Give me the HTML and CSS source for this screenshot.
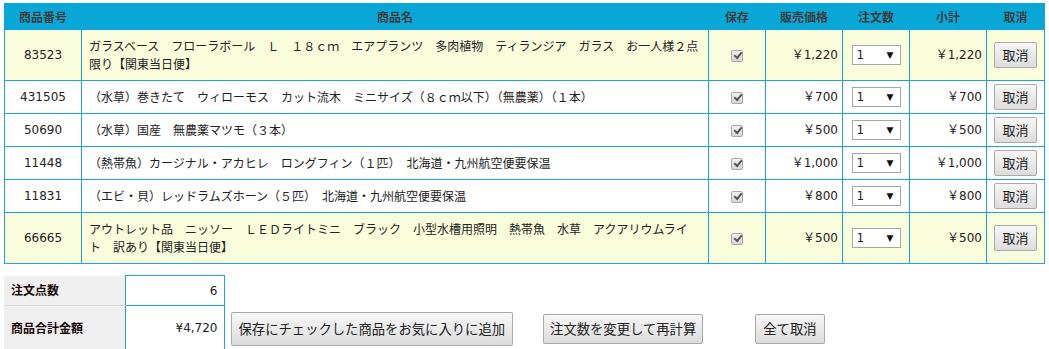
FILE: index.html
```html
<!DOCTYPE html>
<html lang="ja">
<head>
    <meta charset="UTF-8">
    <title>買い物かご</title>
    <link rel="stylesheet" href="styles.css">
</head>
<body>
    <table class="cart">
        <colgroup>
            <col class="col-code">
            <col class="col-name">
            <col class="col-keep">
            <col class="col-price">
            <col class="col-qty">
            <col class="col-sub">
            <col class="col-cancel">
        </colgroup>
        <thead>
            <tr>
                <th>商品番号</th>
                <th>商品名</th>
                <th>保存</th>
                <th>販売価格</th>
                <th>注文数</th>
                <th>小計</th>
                <th>取消</th>
            </tr>
        </thead>
        <tbody>
            <tr class="sameday">
                <td class="code">83523</td>
                <td class="name">ガラスベース　フローラボール　Ｌ　１８ｃｍ　エアプランツ　多肉植物　ティランジア　ガラス　お一人様２点限り【関東当日便】</td>
                <td class="keep"><span class="check"></span></td>
                <td class="price">￥1,220</td>
                <td class="qty"><span class="qty-box"><select><option>1</option><option>2</option><option>3</option></select></span></td>
                <td class="price">￥1,220</td>
                <td class="cancel"><button class="btn btn-row">取消</button></td>
            </tr>
            <tr>
                <td class="code">431505</td>
                <td class="name">（水草）巻きたて　ウィローモス　カット流木　ミニサイズ（８ｃｍ以下）（無農薬）（１本）</td>
                <td class="keep"><span class="check"></span></td>
                <td class="price">￥700</td>
                <td class="qty"><span class="qty-box"><select><option>1</option><option>2</option><option>3</option></select></span></td>
                <td class="price">￥700</td>
                <td class="cancel"><button class="btn btn-row">取消</button></td>
            </tr>
            <tr>
                <td class="code">50690</td>
                <td class="name">（水草）国産　無農薬マツモ（３本）</td>
                <td class="keep"><span class="check"></span></td>
                <td class="price">￥500</td>
                <td class="qty"><span class="qty-box"><select><option>1</option><option>2</option><option>3</option></select></span></td>
                <td class="price">￥500</td>
                <td class="cancel"><button class="btn btn-row">取消</button></td>
            </tr>
            <tr>
                <td class="code">11448</td>
                <td class="name">（熱帯魚）カージナル・アカヒレ　ロングフィン（１匹）　北海道・九州航空便要保温</td>
                <td class="keep"><span class="check"></span></td>
                <td class="price">￥1,000</td>
                <td class="qty"><span class="qty-box"><select><option>1</option><option>2</option><option>3</option></select></span></td>
                <td class="price">￥1,000</td>
                <td class="cancel"><button class="btn btn-row">取消</button></td>
            </tr>
            <tr>
                <td class="code">11831</td>
                <td class="name">（エビ・貝）レッドラムズホーン（５匹）　北海道・九州航空便要保温</td>
                <td class="keep"><span class="check"></span></td>
                <td class="price">￥800</td>
                <td class="qty"><span class="qty-box"><select><option>1</option><option>2</option><option>3</option></select></span></td>
                <td class="price">￥800</td>
                <td class="cancel"><button class="btn btn-row">取消</button></td>
            </tr>
            <tr class="sameday">
                <td class="code">66665</td>
                <td class="name">アウトレット品　ニッソー　ＬＥＤライトミニ　ブラック　小型水槽用照明　熱帯魚　水草　アクアリウムライ<br>ト　訳あり【関東当日便】</td>
                <td class="keep"><span class="check"></span></td>
                <td class="price">￥500</td>
                <td class="qty"><span class="qty-box"><select><option>1</option><option>2</option><option>3</option></select></span></td>
                <td class="price">￥500</td>
                <td class="cancel"><button class="btn btn-row">取消</button></td>
            </tr>
        </tbody>
    </table>

    <div class="footer">
        <table class="summary">
            <colgroup>
                <col class="col-label">
                <col class="col-value">
            </colgroup>
            <tr class="row-count">
                <th>注文点数</th>
                <td>6</td>
            </tr>
            <tr class="row-total">
                <th>商品合計金額</th>
                <td>¥4,720</td>
            </tr>
        </table>
        <div class="actions">
            <button class="btn btn-fav">保存にチェックした商品をお気に入りに追加</button>
            <button class="btn btn-recalc">注文数を変更して再計算</button>
            <button class="btn btn-clear">全て取消</button>
        </div>
    </div>
</body>
</html>
```

FILE: styles.css
```css
body {
    margin: 3px 4px;
    font-family: "DejaVu Sans", "Noto Sans CJK JP", sans-serif;
    font-size: 12px;
    color: #222;
    background: #fff;
}
.cart {
    border-collapse: collapse;
    table-layout: fixed;
    width: 1040px;
}
.col-code { width: 77px; }
.col-name { width: 627px; }
.col-keep { width: 57px; }
.col-price { width: 77px; }
.col-qty { width: 67px; }
.col-sub { width: 77px; }
.col-cancel { width: 58px; }

.cart th {
    background: #08a7d7;
    border: 1px solid #08a7d7;
    color: #3d3d3d;
    font-family: "Noto Sans CJK JP", sans-serif;
    font-weight: bold;
    height: 25px;
    padding: 0;
    line-height: 18px;
}
.cart td {
    border: 1px solid #1ba6d6;
    padding: 7px 4px;
    line-height: 18px;
    vertical-align: middle;
}
.cart tr.sameday td {
    background: #fafddc;
}
.cart td.code {
    text-align: center;
}
.cart td.name {
    padding: 7px 4px 7px 7px;
    font-family: "Noto Sans CJK JP", sans-serif;
}
.cart td.keep {
    text-align: center;
    padding: 0;
}
.cart td.price {
    text-align: right;
}
.cart td.qty {
    text-align: center;
    padding: 0;
}
.cart td.cancel {
    text-align: center;
    padding: 3px 0;
}

.check {
    display: inline-block;
    width: 10px;
    height: 10px;
    border: 1px solid #a8a8a8;
    border-radius: 2px;
    background: linear-gradient(#f2f2f2, #d6d6d6);
    vertical-align: middle;
    position: relative;
}
.check::after {
    content: "";
    position: absolute;
    left: 2px;
    top: 1px;
    width: 6px;
    height: 3px;
    border-left: 2px solid #555;
    border-bottom: 2px solid #555;
    transform: rotate(-50deg);
}

.qty-box {
    display: inline-block;
    position: relative;
    vertical-align: middle;
}
.qty-box select {
    appearance: none;
    -webkit-appearance: none;
    width: 49px;
    height: 20px;
    border: 1px solid #a6a6a6;
    border-radius: 0;
    background: #fff;
    padding: 0 0 0 4px;
    font-family: "DejaVu Sans", sans-serif;
    font-size: 12px;
    color: #222;
    display: block;
}
.qty-box::after {
    content: "▼";
    position: absolute;
    right: 7px;
    top: 4px;
    font-size: 9px;
    line-height: 12px;
    color: #111;
    pointer-events: none;
}

.btn {
    font-family: "Noto Sans CJK JP", sans-serif;
    font-size: 13.33px;
    color: #222;
    background: linear-gradient(#f7f7f7, #dcdcdc);
    border: 1px solid #a9a9a9;
    border-radius: 2px;
    line-height: 18px;
    cursor: pointer;
}
.btn-row {
    font-size: 13px;
    height: 26px;
    padding: 0 7px;
}

.footer {
    display: flex;
    align-items: flex-end;
    margin-top: 11px;
}
.summary {
    border-collapse: collapse;
    table-layout: fixed;
    width: 220px;
}
.col-label { width: 121px; }
.col-value { width: 99px; }
.summary th {
    background: #efefef;
    text-align: left;
    font-family: "Noto Sans CJK JP", sans-serif;
    font-weight: bold;
    color: #1a0a0a;
    padding: 0 7px;
    line-height: 18px;
}
.summary td {
    border: 1px solid #1ba6d6;
    text-align: right;
    padding: 0 6px;
    line-height: 18px;
}
.summary .row-count th {
    border-bottom: 1px solid #dadada;
}
.summary .row-count th,
.summary .row-count td {
    height: 29px;
}
.summary .row-total th,
.summary .row-total td {
    height: 44px;
}
.actions {
    display: flex;
    align-items: center;
    height: 44px;
}
.btn-fav {
    height: 34px;
    padding: 0 7px;
    margin-left: 6px;
}
.btn-recalc {
    height: 30px;
    padding: 0 6px;
    margin-left: 30px;
}
.btn-clear {
    height: 30px;
    padding: 0 7px;
    margin-left: 52px;
}
```
